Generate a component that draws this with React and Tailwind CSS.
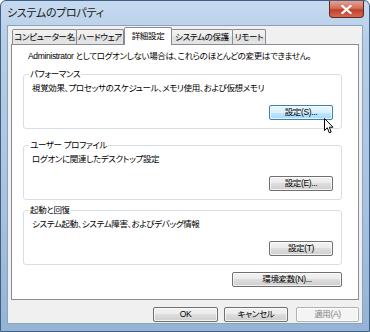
import React from "react";

const font = "font-['Liberation_Sans','Noto_Sans_CJK_JP',sans-serif] [font-feature-settings:'palt']";
const txt = "text-[8.5px] tracking-[-0.35px] whitespace-nowrap";

function Btn({ children, className = "", hot = false, disabled = false }) {
  let look =
    "border-[#707070] text-black bg-[linear-gradient(#f2f2f2,#ebebeb_50%,#dddddd_50%,#cfcfcf)]";
  if (hot) look = "border-[#3c7fb1] text-black bg-[linear-gradient(#eaf6fd,#d9f0fc_50%,#bee6fd_50%,#a7d9f5)]";
  if (disabled) look = "border-[#adb2b5] text-[#838383] bg-[#f4f4f4]";
  return (
    <div
      className={`h-[15px] rounded-[2px] border shadow-[inset_0_0_0_1px_rgba(255,255,255,0.7)] flex items-center justify-center leading-none ${txt} ${look} ${className}`}
    >
      {children}
    </div>
  );
}

function Group({ label, text, button, className = "" }) {
  return (
    <div className={`relative h-[55px] border border-[#d5dfe5] rounded-[3px] pl-[8px] pr-[8px] pt-[8px] flex flex-col ${className}`}>
      <div className={`absolute -top-[6px] left-[5px] bg-white px-[1px] leading-[11px] ${txt}`}>{label}</div>
      <div className={`leading-[10px] ${txt}`}>{text}</div>
      <div className="flex justify-end mt-[12px]">{button}</div>
    </div>
  );
}

function Cursor() {
  return (
    <svg className="absolute left-[323px] top-[117px]" width="10" height="16" viewBox="0 0 10 16">
      <path d="M0.5 0.5 L0.5 12.5 L3.3 9.8 L5.3 14.8 L7.2 14 L5.3 9.2 L9 9.2 Z" fill="#fff" stroke="#000" strokeWidth="1" strokeLinejoin="round" />
    </svg>
  );
}

export default function App() {
  const tabs = [
    { t: "コンピューター名", w: "w-[65px]" },
    { t: "ハードウェア", w: "w-[48px]" },
    { t: "詳細設定", w: "w-[48px]", sel: true },
    { t: "システムの保護", w: "w-[62px]" },
    { t: "リモート", w: "w-[34px]" },
  ];

  return (
    <div className={`relative w-[370px] h-[332px] overflow-hidden rounded-t-[6px] border border-[#3f5f86] bg-[linear-gradient(180deg,#c6daef_0%,#b6cee7_12%,#a9c3df_60%,#94b3d5_100%)] flex flex-col text-black ${font}`}>
      {/* title bar */}
      <div className="h-[24px] shrink-0 flex items-center pl-[6px] text-[11px] tracking-[-0.3px] text-[#1a1a1a]">システムのプロパティ</div>
      <div className="absolute top-0 right-[5px] w-[35px] h-[17px] rounded-b-[4px] border border-t-0 border-[#5b2a22] bg-[linear-gradient(#e8a093,#d36e5c_45%,#c0402c_55%,#d5694f)] flex items-center justify-center">
        <svg width="11" height="9" viewBox="0 0 11 9">
          <path d="M1.5 1 L9.5 8 M9.5 1 L1.5 8" stroke="#fff" strokeWidth="2.2" strokeLinecap="square" />
        </svg>
      </div>

      {/* client area */}
      <div className="flex-1 mx-[6px] border border-[#8aa2bf] bg-[#f0f0f0] flex flex-col px-[3px]">
        {/* tabs */}
        <div className="h-[18px] shrink-0 flex items-end pl-[1px] relative z-10">
          {tabs.map((tab) =>
            tab.sel ? (
              <div
                key={tab.t}
                className={`${tab.w} h-[18px] -mb-px bg-white border border-b-0 border-[#898c95] rounded-t-[2px] flex items-center justify-center leading-none ${txt}`}
              >
                {tab.t}
              </div>
            ) : (
              <div
                key={tab.t}
                className={`${tab.w} h-[15px] -ml-px first:ml-0 bg-[linear-gradient(#f3f3f3,#ebebeb_50%,#dedede_50%,#e5e5e5)] border border-b-0 border-[#898c95] rounded-t-[2px] flex items-center justify-center leading-none ${txt}`}
              >
                {tab.t}
              </div>
            )
          )}
        </div>

        {/* panel */}
        <div className="h-[256px] shrink-0 bg-white border border-[#898c95] pl-[11px] pr-[16px] pt-[6px] flex flex-col">
          <div className={`leading-[10px] pl-[5px] ${txt}`}>Administrator としてログオンしない場合は、これらのほとんどの変更はできません。</div>
          <Group
            className="mt-[13px]"
            label="パフォーマンス"
            text="視覚効果、プロセッサのスケジュール、メモリ使用、および仮想メモリ"
            button={<Btn hot className="w-[64px]">設定(S)...</Btn>}
          />
          <Group
            className="mt-[16px]"
            label="ユーザー プロファイル"
            text="ログオンに関連したデスクトップ設定"
            button={<Btn className="w-[64px]">設定(E)...</Btn>}
          />
          <Group
            className="mt-[10px]"
            label="起動と回復"
            text="システム起動、システム障害、およびデバッグ情報"
            button={<Btn className="w-[64px]">設定(T)</Btn>}
          />
          <div className="flex justify-end mt-[7px]">
            <Btn className="w-[110px]">環境変数(N)...</Btn>
          </div>
        </div>

        {/* dialog buttons */}
        <div className="flex justify-end gap-[6px] mt-[7px]">
          <Btn className="w-[65px]">OK</Btn>
          <Btn className="w-[64px]">キャンセル</Btn>
          <Btn disabled className="w-[63px] ml-[2px]">適用(A)</Btn>
        </div>
      </div>
      <div className="h-[7px] shrink-0" />
      <Cursor />
    </div>
  );
}
